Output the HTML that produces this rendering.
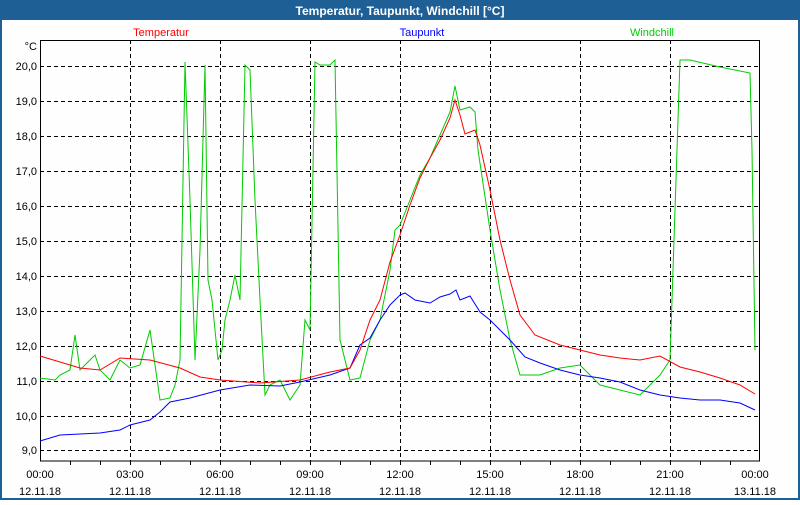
<!DOCTYPE html>
<html><head><meta charset="utf-8"><style>
body{margin:0;width:800px;height:500px;overflow:hidden;background:#fff;font-family:"Liberation Sans",sans-serif}
</style></head><body>
<svg width="800" height="500" xmlns="http://www.w3.org/2000/svg" font-family="Liberation Sans, sans-serif" font-size="11">
<rect x="0" y="0" width="800" height="500" fill="#1e5f96"/>
<rect x="2" y="20" width="796" height="478" fill="#fefefe"/>
<text x="400" y="15" fill="#fff" font-weight="bold" font-size="12" text-anchor="middle">Temperatur, Taupunkt, Windchill [°C]</text>
<text x="161" y="36" fill="#ff0000" text-anchor="middle">Temperatur</text>
<text x="422" y="36" fill="#0000ff" text-anchor="middle">Taupunkt</text>
<text x="652" y="36" fill="#00cc00" text-anchor="middle">Windchill</text>
<g stroke="#000" stroke-dasharray="4,3" stroke-width="1">
<path d="M40 66.5H760M40 101.5H760M40 136.5H760M40 171.5H760M40 206.5H760M40 241.5H760M40 276.5H760M40 311.5H760M40 346.5H760M40 381.5H760M40 416.5H760M40 450.5H760"/>
<path d="M130.5 40V461M220.5 40V461M310.5 40V461M400.5 40V461M490.5 40V461M580.5 40V461M670.5 40V461"/>
</g>
<rect x="40.5" y="40.5" width="719" height="420.5" fill="none" stroke="#000"/>
<g stroke="#000"><path d="M70.5 461v4M100.5 461v4M130.5 461v4M160.5 461v4M190.5 461v4M220.5 461v4M250.5 461v4M280.5 461v4M310.5 461v4M340.5 461v4M370.5 461v4M400.5 461v4M430.5 461v4M460.5 461v4M490.5 461v4M520.5 461v4M550.5 461v4M580.5 461v4M610.5 461v4M640.5 461v4M670.5 461v4M700.5 461v4M730.5 461v4"/></g>
<g text-anchor="end" fill="#000">
<text x="37" y="50">°C</text>
<text x="37" y="70">20,0</text><text x="37" y="105">19,0</text><text x="37" y="140">18,0</text><text x="37" y="175">17,0</text><text x="37" y="210">16,0</text><text x="37" y="245">15,0</text><text x="37" y="280">14,0</text><text x="37" y="315">13,0</text><text x="37" y="350">12,0</text><text x="37" y="385">11,0</text><text x="37" y="420">10,0</text><text x="37" y="454">9,0</text>
</g>
<g text-anchor="middle" fill="#000">
<text x="40" y="478">00:00</text><text x="40" y="495">12.11.18</text>
<text x="130" y="478">03:00</text><text x="130" y="495">12.11.18</text>
<text x="220" y="478">06:00</text><text x="220" y="495">12.11.18</text>
<text x="310" y="478">09:00</text><text x="310" y="495">12.11.18</text>
<text x="400" y="478">12:00</text><text x="400" y="495">12.11.18</text>
<text x="490" y="478">15:00</text><text x="490" y="495">12.11.18</text>
<text x="580" y="478">18:00</text><text x="580" y="495">12.11.18</text>
<text x="670" y="478">21:00</text><text x="670" y="495">12.11.18</text>
<text x="755" y="478">00:00</text><text x="755" y="495">13.11.18</text>
</g>
<polyline fill="none" stroke="#00cc00" points="40,378 55,380 60,375 70,370 75,335 80,370 90,360 95,355 100,370 110,380 120,360 130,368 140,365 150,330 155,365 160,400 170,398 175,385 180,360 185,62 190,200 195,360 200,250 205,65 208,280 212,300 215,330 218,360 222,350 225,320 230,300 235,275 240,300 245,65 250,70 255,200 260,300 265,395 270,385 280,380 290,400 300,385 305,320 310,330 315,62 320,65 330,65 335,60 340,340 350,380 360,378 370,340 380,320 390,270 395,230 400,225 410,200 420,175 430,158 440,135 450,112 455,86 460,110 470,107 475,112 478,150 490,230 500,290 510,340 520,375 540,375 560,368 580,365 600,385 620,390 640,395 660,375 670,360 680,60 690,60 720,67 750,73 752,150 755,350"/>
<polyline fill="none" stroke="#0000ff" points="40,441 60,435 100,433 120,430 130,425 150,420 160,412 170,402 190,398 220,390 250,385 280,386 300,382 330,375 350,368 360,345 370,338 380,320 390,305 400,295 405,293 415,300 430,303 440,297 450,294 456,290 460,300 470,296 480,312 490,320 500,330 510,340 525,357 540,363 560,370 580,375 600,378 620,382 640,390 660,395 680,398 700,400 720,400 740,403 755,410"/>
<polyline fill="none" stroke="#ff0000" points="40,356 60,362 80,368 100,370 120,358 150,360 180,368 200,377 220,380 260,383 300,380 330,372 350,368 360,350 370,320 380,300 390,262 400,235 410,205 420,178 430,158 440,140 450,118 455,100 460,115 465,134 475,130 480,145 490,190 500,240 510,280 520,315 535,335 560,345 580,350 600,355 620,358 640,360 660,356 680,367 700,372 720,378 740,385 755,394"/>
</svg>
</body></html>
